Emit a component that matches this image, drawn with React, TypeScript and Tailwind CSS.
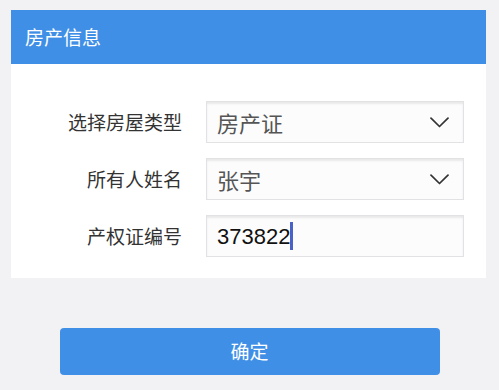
const font = { fontFamily: '"Noto Sans CJK SC", "Noto Sans", sans-serif' };

function Chevron() {
  return (
    <svg width="19" height="11" viewBox="0 0 19 11" fill="none" className="text-[#333]">
      <path d="M1 1.2 9.5 9.5 18 1.2" stroke="currentColor" strokeWidth="1.7" strokeLinecap="round" strokeLinejoin="round" />
    </svg>
  );
}

function Row({ label, children }: { label: string; children: React.ReactNode }) {
  return (
    <div className="flex items-center">
      <div className="w-[171px] text-right text-[19px] text-[#333]">{label}</div>
      <div className="ml-[24px] flex h-[42px] w-[258px] items-center justify-between border border-[#e2e2e4] bg-[#fcfcfd] pl-[10px] pr-[14px] shadow-[inset_0_2px_2px_rgba(0,0,0,0.08)]">
        {children}
      </div>
    </div>
  );
}

export default function App() {
  return (
    <div className="min-h-[390px] bg-[#f2f2f4] pt-[10px]" style={font}>
      <div className="mx-[11px] w-[475px]">
        <div className="flex h-[54px] items-center bg-[#3f8fe6] pl-[14px] text-[19px] text-white">
          房产信息
        </div>
        <div className="flex flex-col gap-[15px] bg-white pb-[21px] pt-[37px]">
          <Row label="选择房屋类型">
            <span className="text-[22px] text-[#555]">房产证</span>
            <Chevron />
          </Row>
          <Row label="所有人姓名">
            <span className="text-[22px] text-[#555]">张宇</span>
            <Chevron />
          </Row>
          <Row label="产权证编号">
            <span className="flex items-center text-[22px] text-[#111]" style={{ fontFamily: '"Liberation Sans", Arial, sans-serif' }}>
              373822
              <span className="inline-block h-[28px] w-[3px] bg-[#4a62c8]" />
            </span>
          </Row>
        </div>
      </div>
      <button className="mx-auto mt-[50px] flex h-[47px] w-[380px] items-center justify-center rounded-[4px] bg-[#3f8fe6] text-[19px] text-white">
        确定
      </button>
    </div>
  );
}
